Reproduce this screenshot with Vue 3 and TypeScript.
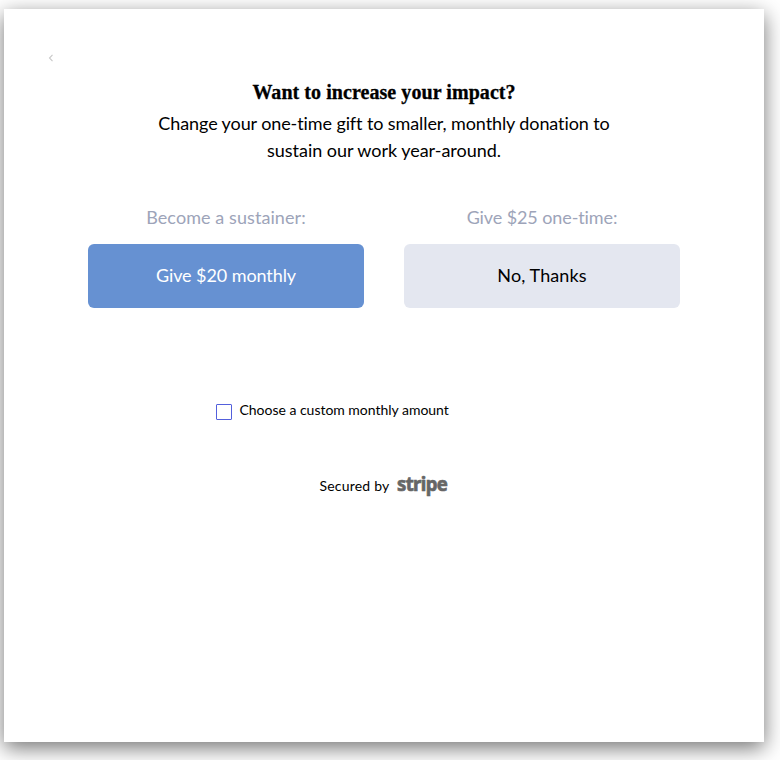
<script setup lang="ts">
import { ref } from 'vue'

interface Option {
  label: string
  action: string
  kind: 'primary' | 'secondary'
}

const options: Option[] = [
  { label: 'Become a sustainer:', action: 'Give $20 monthly', kind: 'primary' },
  { label: 'Give $25 one-time:', action: 'No, Thanks', kind: 'secondary' },
]
const custom = ref(false)
</script>

<template>
  <main class="page">
    <section class="card">
      <button class="back" aria-label="Back">
        <svg width="6" height="8" viewBox="0 0 6 8"><path d="M4.5 .8 1.5 4l3 3.2" /></svg>
      </button>
      <h1 class="title">Want to increase your impact?</h1>
      <p class="lead">
        <span class="line first">Change your one-time gift to smaller, monthly donation to</span>
        <span class="line second">sustain our work year-around.</span>
      </p>
      <div class="options">
        <div v-for="o in options" :key="o.kind" class="option" :class="o.kind">
          <div class="label">{{ o.label }}</div>
          <button class="action">{{ o.action }}</button>
        </div>
      </div>
      <label class="custom">
        <input v-model="custom" type="checkbox" class="box" />
        <span>Choose a custom monthly amount</span>
      </label>
      <div class="secured">
        <span class="by">Secured by</span>
        <span class="stripe">stripe</span>
      </div>
    </section>
  </main>
</template>

<style>
body {
  background: #fff;
  overflow: hidden;
}
</style>

<style scoped>
.page {
  box-sizing: border-box;
  height: 760px;
  padding: 9px 16px 18px 4px;
  font-family: Lato, "Liberation Sans", sans-serif;
  font-variant-ligatures: none;
  color: #000;
}
.card {
  box-sizing: border-box;
  width: 760px;
  height: 733px;
  padding: 45px 84px 0;
  background: #fff;
  box-shadow: 0 6px 20px rgba(0, 0, 0, 0.55);
}
button {
  border: 0;
  padding: 0;
  background: none;
  font: inherit;
  letter-spacing: inherit;
}
.back {
  display: block;
  width: 6px;
  height: 8px;
  margin-left: -40px;
}
.back svg {
  display: block;
  fill: none;
  stroke: #c8c8c8;
  stroke-width: 1.1;
}
.title {
  margin: 18px 0 0;
  font: bold 20px/24px "Liberation Serif", serif;
  text-align: center;
  letter-spacing: 0.06px;
  -webkit-text-stroke: 0.3px #000;
}
.lead {
  margin: 6px 0 0;
  font-size: 18px;
  line-height: 27px;
  text-align: center;
}
.line {
  display: block;
  white-space: nowrap;
}
.first {
  letter-spacing: -0.1px;
}
.second {
  letter-spacing: -0.03px;
}
.options {
  display: grid;
  grid-template-columns: 276px 276px;
  column-gap: 40px;
  margin-top: 40px;
}
.option {
  font-size: 18px;
  text-align: center;
}
.primary .label {
  letter-spacing: 0.08px;
}
.secondary .label {
  letter-spacing: -0.1px;
}
.label {
  height: 26px;
  margin-bottom: 14px;
  line-height: 26px;
  color: #9da4b9;
}
.action {
  display: block;
  width: 276px;
  height: 64px;
  padding-bottom: 2px;
  border-radius: 6px;
}
.primary .action {
  background: #6691d2;
  color: #fff;
  letter-spacing: -0.08px;
}
.secondary .action {
  background: #e4e7f0;
  color: #000;
  letter-spacing: 0.1px;
}
.custom {
  display: flex;
  align-items: center;
  height: 20px;
  margin: 93px 0 0 128px;
  font-size: 14px;
  letter-spacing: -0.02px;
}
.custom span {
  padding-bottom: 3px;
}
.box {
  appearance: none;
  box-sizing: border-box;
  width: 16px;
  height: 16px;
  margin: 2px 7.5px 0 0;
  border: 1px solid #5360dc;
  border-radius: 1px;
  background: #fff;
}
.secured {
  display: flex;
  align-items: center;
  height: 24px;
  margin: 52px 0 0 231.5px;
  font-size: 14px;
}
.by {
  width: 77px;
  letter-spacing: 0.2px;
}
.stripe {
  padding-bottom: 2px;
  font: bold 20px/24px "Noto Sans", sans-serif;
  color: #666;
  letter-spacing: -0.7px;
  transform: scaleX(0.93);
  transform-origin: left center;
  -webkit-text-stroke: 0.7px #666;
}
</style>
